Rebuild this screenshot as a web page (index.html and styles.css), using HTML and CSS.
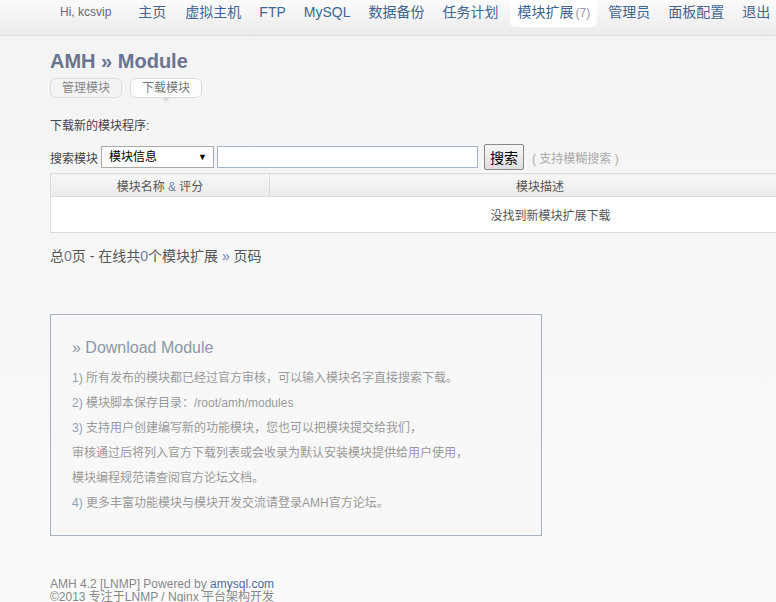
FILE: index.html
```html
<!DOCTYPE html>
<html lang="zh-CN">
<head>
  <meta charset="UTF-8">
  <title>AMH » Module</title>
  <link rel="stylesheet" href="styles.css">
</head>
<body>

  <div id="header">
    <span class="hi">Hi, kcsvip</span>
    <ul class="nav">
      <li><a href="#">主页</a></li>
      <li><a href="#">虚拟主机</a></li>
      <li><a href="#">FTP</a></li>
      <li><a href="#">MySQL</a></li>
      <li><a href="#">数据备份</a></li>
      <li><a href="#">任务计划</a></li>
      <li class="active"><a href="#">模块扩展<span class="num">(7)</span></a></li>
      <li><a href="#">管理员</a></li>
      <li><a href="#">面板配置</a></li>
      <li><a href="#">退出</a></li>
    </ul>
  </div>

  <div id="main">
    <h1>AMH » Module</h1>
    <div class="tabs">
      <a href="#" class="tab">管理模块</a>
      <a href="#" class="tab current">下载模块</a>
    </div>

    <p class="intro">下载新的模块程序:</p>

    <form class="search">
      <label>搜索模块</label>
      <div class="select">模块信息<span class="arrow">▼</span></div>
      <input type="text" class="input">
      <button type="button" class="btn">搜索</button>
      <span class="tip">( 支持模糊搜索 )</span>
    </form>

    <table class="list">
      <tr>
        <th class="col-name">模块名称 <span class="amp">&amp;</span> 评分</th>
        <th>模块描述</th>
      </tr>
      <tr>
        <td colspan="2" class="empty">没找到新模块扩展下载</td>
      </tr>
    </table>

    <p class="pages">总<b>0</b>页 - 在线共<b>0</b>个模块扩展 <b>»</b> 页码</p>

    <div class="notice">
      <h3>» Download Module</h3>
      <p><i>1)</i> 所有发布的模块都已经过官方审核，可以输入模块名字直接搜索下载。</p>
      <p><i>2)</i> 模块脚本保存目录：/root/amh/modules</p>
      <p><i>3)</i> 支持用户创建编写新的功能模块，您也可以把模块提交给我们，</p>
      <p>审核通过后将列入官方下载列表或会收录为默认安装模块提供给用户使用，</p>
      <p>模块编程规范请查阅官方论坛文档。</p>
      <p><i>4)</i> 更多丰富功能模块与模块开发交流请登录AMH官方论坛。</p>
    </div>
  </div>

  <div id="footer">
    AMH 4.2 [LNMP] Powered by <a href="#">amysql.com</a><br>
    ©2013 专注于LNMP / Nginx 平台架构开发
  </div>

</body>
</html>
```

FILE: styles.css
```css
body {
  margin: 0;
  font-family: "Liberation Sans", Arial, "Noto Sans CJK SC", sans-serif;
  font-size: 12px;
  color: #555;
  background: linear-gradient(#f3f3f3, #fafafa 500px);
  min-height: 602px;
  overflow: hidden;
}

a {
  text-decoration: none;
}

#header {
  display: flex;
  align-items: flex-start;
  height: 35px;
  border-bottom: 1px solid #dcdcdc;
  background: linear-gradient(#fbfbfb, #ebebeb);
  white-space: nowrap;
}

#header .hi {
  margin-left: 60px;
  line-height: 25px;
  font-size: 12px;
  color: #667;
}

.nav {
  display: flex;
  list-style: none;
  margin: 0 0 0 18px;
  padding: 0;
}

.nav li a {
  display: block;
  padding: 0 9px;
  line-height: 25px;
  font-size: 14px;
  color: #3f6591;
}

.nav li:nth-child(2) a {
  padding-left: 10px;
}

.nav li.active a {
  background: #fff;
  border-radius: 0 0 5px 5px;
  padding: 0 7px 1px;
  margin: 0 2px 0 3px;
}

.nav .num {
  margin-left: 2px;
  font-size: 12px;
  color: #99a;
}

#main {
  padding: 0 0 0 50px;
}

h1 {
  margin: 13px 0 0;
  font-size: 20px;
  line-height: 24px;
  color: #6a7390;
}

.tabs {
  display: flex;
  gap: 8px;
  margin-top: 5px;
}

.tab {
  position: relative;
  padding: 0 11px;
  line-height: 18px;
  border: 1px solid #dcdcdc;
  border-radius: 6px;
  background: #f4f4f4;
  color: #888;
  font-size: 12px;
}

.tab.current {
  background: #fff;
  color: #777;
}

.tab.current:after {
  content: "";
  position: absolute;
  left: 50%;
  bottom: -5px;
  margin-left: -4px;
  border: 4px solid transparent;
  border-top-color: #dcdcdc;
  border-bottom: 0;
}

.intro {
  margin: 20px 0 0;
  line-height: 16px;
  color: #444;
}

.search {
  display: flex;
  align-items: center;
  margin-top: 10px;
  height: 26px;
}

.search label {
  color: #444;
  margin-right: 3px;
}

.select {
  display: flex;
  justify-content: space-between;
  width: 98px;
  height: 20px;
  line-height: 20px;
  padding: 0 6px 0 7px;
  border: 1px solid #a9a9a9;
  background: #fff;
  color: #000;
  font-size: 12px;
}

.select .arrow {
  font-size: 9px;
}

.input {
  width: 259px;
  height: 20px;
  margin: 0 0 0 3px;
  padding: 0;
  border: 1px solid #a5b4c8;
}

.btn {
  height: 26px;
  margin-left: 6px;
  padding: 0 5px;
  border: 1px solid #888;
  border-radius: 2px;
  background: linear-gradient(#f6f6f6, #dedede);
  font-family: "Noto Sans CJK SC", sans-serif;
  font-size: 14px;
  color: #000;
}

.tip {
  margin-left: 8px;
  color: #aaa;
}

.list {
  margin-top: 3px;
  width: 761px;
  border-collapse: collapse;
  background: #fff;
}

.list th {
  height: 22px;
  padding: 0;
  border: 1px solid #dcdcdc;
  background: linear-gradient(#f7f7f7, #ececec);
  font-weight: normal;
  color: #555;
}

.list th.col-name {
  width: 218px;
}

.amp {
  color: #6a7fa8;
}

.list td {
  height: 35px;
  padding: 0;
  border: 1px solid #dcdcdc;
}

.list td.empty {
  padding-left: 240px;
  text-align: center;
  color: #555;
}

.pages {
  margin: 14px 0 0;
  font-size: 14px;
  line-height: 18px;
  color: #555;
}

.pages b {
  font-weight: normal;
  color: #6a7fa8;
}

.notice {
  width: 469px;
  margin-top: 49px;
  padding: 22px 0 19px 21px;
  border: 1px solid #aab3c2;
  background: #f8f8f8;
}

.notice h3 {
  margin: 0 0 7px;
  font-size: 16px;
  font-weight: normal;
  line-height: 22px;
  color: #8a97a8;
}

.notice p {
  margin: 0;
  line-height: 25px;
  color: #999;
}

.notice i {
  font-style: normal;
  color: #8f9fb5;
}

#footer {
  margin: 42px 0 0 50px;
  line-height: 13px;
  color: #888;
}

#footer a {
  color: #4f6a9a;
}
```
